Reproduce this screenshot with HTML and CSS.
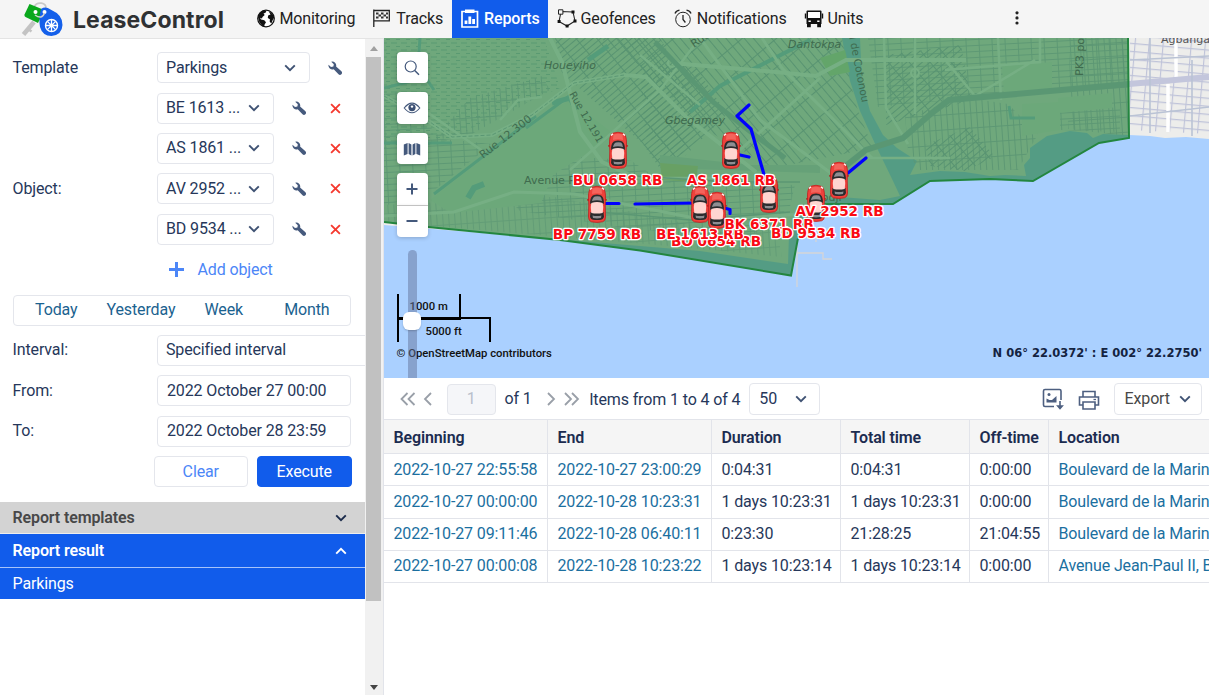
FILE: index.html
```
<!DOCTYPE html>
<html lang="en">
<head>
<meta charset="utf-8">
<title>LeaseControl</title>
<link rel="stylesheet" href="styles.css">
</head>
<body>
<svg class="defs" width="0" height="0">
  <defs>
    <symbol id="chev" viewBox="0 0 12 8"><path d="M1.2 1.3 6 6.2l4.800-4.900" fill="none" stroke="currentColor" stroke-width="1.900"/></symbol>
    <symbol id="wrench" viewBox="0 0 14 14"><path d="M3.200.7a4 4 0 0 1 4.900 4.900l5.300 4.700a2 2 0 0 1-2.900 2.900L5.700 8.200A4 4 0 0 1 .5 3.700L3 6l2.400-.5.400-2.200z" fill="currentColor"/></symbol>
    <symbol id="cross" viewBox="0 0 12 12"><path d="M1.200 1.200l9.600 9.600M10.800 1.200l-9.600 9.600" stroke="currentColor" stroke-width="2" fill="none"/></symbol>
    <symbol id="car" viewBox="0 0 22 38">
      <path d="M1 14.500l4-1.800v3H1.500zM21 14.500l-4-1.800v3h3.500z" fill="#b3161a"/>
      <path d="M5 2.500Q11 0 17 2.500 19.500 5 19.500 12l-.3 8 .3 12q0 4-3 4.800-5.500 1.200-11 0-3-.8-3-4.800l.3-12-.3-8Q2.500 5 5 2.500z" fill="#ee423c" stroke="#c21d1d" stroke-width=".8"/>
      <path d="M6.500 3.500Q11 2 15.500 3.500L16 9q-5-1.500-10 0z" fill="#f4645c"/>
      <path d="M4 4.500l2-1.800M18 4.500l-2-1.800" stroke="#fff" stroke-width="1.300"/>
      <path d="M4 17Q4.500 11 8 10q3-.8 6 0 3.500 1 4 7l-.5 2H4.500zM4.500 27h13l.5 5q-1 2.500-3 2.800-4 .6-8 0-2-.3-3-2.800z" fill="#2b2b2d"/>
      <path d="M6 16q.8-4 3-4.600 3-.6 5 .2 1.500 1 2 4.400Q11 14.500 6 16zM6.500 30.500q4.500 1.200 9 0L15 33q-4 .8-8 0z" fill="#8e8e92"/>
      <path d="M5.300 18Q11 16 16.700 18l.5 4-.5 6Q11 29 5.300 28l-.5-6z" fill="#ffd5d0"/>
    </symbol>
    <pattern id="g1" width="16" height="5" patternUnits="userSpaceOnUse" patternTransform="rotate(-40)"><path d="M0 .5h16M.5 0v5" stroke="#b4bad0" stroke-width="1"/></pattern>
    <pattern id="g2" width="22" height="7" patternUnits="userSpaceOnUse" patternTransform="rotate(50)"><path d="M0 .5h22M.5 0v7" stroke="#b4bad0" stroke-width="1.100"/></pattern>
    <pattern id="g3" width="13" height="6" patternUnits="userSpaceOnUse" patternTransform="rotate(-3)"><path d="M0 .5h13M.5 0v6" stroke="#bdc3d6" stroke-width=".9"/></pattern>
    <pattern id="g4" width="6" height="15" patternUnits="userSpaceOnUse" patternTransform="rotate(-4)"><path d="M0 .5h6M.5 0v15" stroke="#bcc1d5" stroke-width=".9"/></pattern>
    <pattern id="g5" width="14" height="8" patternUnits="userSpaceOnUse" patternTransform="rotate(5)"><path d="M0 .5h14M.5 0v8" stroke="#bfc3d9" stroke-width="1.300"/></pattern>
    <pattern id="marsh" width="10" height="7" patternUnits="userSpaceOnUse"><path d="M1 1h6M6 4.500h4" stroke="#b2c6ce" stroke-width=".9"/></pattern>
  </defs>
</svg>

<header class="topbar">
  <div class="brand">
    <svg class="brand-mark" viewBox="0 0 46 36" width="46" height="36">
      <path d="M15 21 4.500 33.500" stroke="#c3c3c3" stroke-width="4.500"/><path d="M9 28l3.500 2.500" stroke="#c3c3c3" stroke-width="2.500"/>
      <path d="M15 6C18 0 28 1 27 8" fill="none" stroke="#c9c9c9" stroke-width="1.800"/>
      <path d="M10.500 3 24 8.500q1.500 1 .8 2.500L19 22 6.500 16q-1.500-1-1-2.500z" fill="#0aa81c"/><circle cx="16.500" cy="11" r="2" fill="#fff"/>
      <path d="M22 8q4.500-3 9.500.5Q44 14 43.500 24q-.5 10-11 11-9 0-11.500-9-1.500-9 1-18z" fill="#1560ea"/>
      <circle cx="25.500" cy="11" r="2" fill="#fff"/><path d="M16 14q7 5 9.500-2" fill="none" stroke="#d0d0d0" stroke-width="1.500"/>
      <circle cx="32.500" cy="24.500" r="6" fill="none" stroke="#fff" stroke-width="1.400"/>
      <path d="M32.500 19v11M27 24.500h11M28.600 20.600l7.800 7.800M36.400 20.600l-7.800 7.800" stroke="#fff" stroke-width="1.300"/><circle cx="32.500" cy="24.500" r="2" fill="#fff"/>
    </svg>
    <span class="brand-name">LeaseControl</span>
  </div>
  <nav class="nav">
    <a class="nav-item"><svg width="20" height="20" viewBox="0 0 20 20"><circle cx="10" cy="9.500" r="8.300" fill="#fff" stroke="#111" stroke-width="1.200"/><path d="M2 8Q3 3.500 7 1.500l3.500.3-1 2-2 .8 1.200 1.300-2.200 2-.5 1.700-2-.8 1 1.700 3.300.8 1.700 2-1.400 2.200-.4 2.300Q3.200 16 2 8zM12.500 2q4.800 2 5.700 6.500l-1.600 2.700-1.200 3.300-1.700-1.700.2-2.500-2.100-1.300.3-2.500 2.400-1z" fill="#111"/></svg>Monitoring</a>
    <a class="nav-item"><svg width="20" height="20" viewBox="0 0 20 20"><path d="M1.800.5v17.500M1.800 1.500h15.500v10.300H1.800" fill="none" stroke="#222" stroke-width="1.300"/><path d="M4 3.500h2.500v2H4zM9 3.500h2.500v2H9zM14 3.500h2v2h-2zM6.500 5.500H9v2H6.500zM11.500 5.500H14v2h-2.500zM4 7.500h2.500v2H4zM9 7.500h2.500v2H9zM14 7.500h2v2h-2z" fill="#333"/></svg>Tracks</a>
    <a class="nav-item active"><svg width="20" height="20" viewBox="0 0 20 20"><path d="M2 2.500h15.500v15.500H2z" fill="none" stroke="#fff" stroke-width="1.700"/><path d="M5 .5h9.500v3.500H5z" fill="#fff"/><path d="M4.600 11.500h2.800V15H4.600zM8.400 7.500h2.800V15H8.400zM12.200 10H15v5h-2.800z" fill="#fff"/></svg>Reports</a>
    <a class="nav-item"><svg width="20" height="20" viewBox="0 0 20 20"><path d="M4 2.500 16 3M4 3l-2 9.500M2 12.500l8 4.500L18 12M16 3l2 9" fill="none" stroke="#222" stroke-width="1.100"/><path d="M1.500.8h4.400v4.400H1.500z" fill="#f5f5f5" stroke="#222"/><path d="M14.500 1.500h3v3h-3zM.6 11h3v3h-3zM16.500 10.500h3v3h-3zM8.600 15.500h3v3h-3z" fill="#111"/></svg>Geofences</a>
    <a class="nav-item"><svg width="20" height="20" viewBox="0 0 20 20"><circle cx="10" cy="10.500" r="7.300" fill="none" stroke="#222" stroke-width="1"/><path d="M10 6v4.500l2.400 3M2 4.500Q3 1.800 6.500 1.200M18 4.500Q17 1.800 13.500 1.200" fill="none" stroke="#222" stroke-width="1.300"/></svg>Notifications</a>
    <a class="nav-item"><svg width="20" height="20" viewBox="0 0 20 20"><path d="M3.500 1.500h13q1 0 1 1v12.500h-15V2.500q0-1 1-1z" fill="#111"/><path d="M4 3h12v6H4z" fill="#fff"/><path d="M1.500 4.500v5M18.500 4.500v5" stroke="#111" stroke-width="1.400"/><path d="M3 14.500h3.800v3.700H3zM13.200 14.500H17v3.700h-3.800z" fill="#111"/><path d="M4.500 11.500h2.300V13H4.500zM13.200 11.500h2.300V13h-2.300z" fill="#fff"/></svg>Units</a>
  </nav>
  <svg class="more" width="6" height="16" viewBox="0 0 6 16"><circle cx="3" cy="2.800" r="1.600"/><circle cx="3" cy="7.900" r="1.600"/><circle cx="3" cy="13" r="1.600"/></svg>
</header>

<main class="workspace">
  <aside class="side">
    <div class="side-content">
      <div class="form">
        <div class="row"><span class="label">Template</span><div class="select wide">Parkings<svg class="chev"><use href="#chev"/></svg></div><svg class="ico wr last"><use href="#wrench"/></svg></div>
        <div class="group">
          <span class="label">Object:</span>
          <div class="objects">
            <div class="row"><div class="select">BE 1613 ...<svg class="chev"><use href="#chev"/></svg></div><svg class="ico wr"><use href="#wrench"/></svg><svg class="ico rm"><use href="#cross"/></svg></div>
            <div class="row"><div class="select">AS 1861 ...<svg class="chev"><use href="#chev"/></svg></div><svg class="ico wr"><use href="#wrench"/></svg><svg class="ico rm"><use href="#cross"/></svg></div>
            <div class="row"><div class="select">AV 2952 ...<svg class="chev"><use href="#chev"/></svg></div><svg class="ico wr"><use href="#wrench"/></svg><svg class="ico rm"><use href="#cross"/></svg></div>
            <div class="row"><div class="select">BD 9534 ...<svg class="chev"><use href="#chev"/></svg></div><svg class="ico wr"><use href="#wrench"/></svg><svg class="ico rm"><use href="#cross"/></svg></div>
            <div class="row add"><svg width="15" height="15" viewBox="0 0 15 15"><path d="M7.500 0v15M0 7.500h15" stroke="#4c86f7" stroke-width="3"/></svg><span>Add object</span></div>
          </div>
        </div>
        <div class="row"><div class="periods"><span>Today</span><span>Yesterday</span><span>Week</span><span>Month</span></div></div>
        <div class="row"><span class="label">Interval:</span><div class="field over">Specified interval</div></div>
        <div class="row"><span class="label">From:</span><div class="field date">2022 October 27 00:00</div></div>
        <div class="row"><span class="label">To:</span><div class="field date">2022 October 28 23:59</div></div>
        <div class="row actions"><span class="btn">Clear</span><span class="btn primary">Execute</span></div>
      </div>
      <div class="acc muted"><b>Report templates</b><svg class="chev"><use href="#chev"/></svg></div>
      <div class="acc open"><b>Report result</b><svg class="chev up"><use href="#chev"/></svg></div>
      <div class="acc item">Parkings</div>
    </div>
    <div class="scroll"><i class="arrow up"></i><i class="thumb"></i><i class="arrow down"></i></div>
  </aside>

  <section class="content">
    <div class="map">
      <svg class="map-canvas" viewBox="384 38 825 340" width="825" height="340">
        <rect x="384" y="38" width="825" height="340" fill="#aad0ff"/>
        <path d="M384 38H1209V139L1186 137 1165 138 1150 136 1129 135 1103 134 1093 138 1087 133 1070 131 1047 136 1030 148 1030 158 1024 165 1026 176 1005 175 990 176 965 172 940 171 910 175 917 161 897 148 883 135 870 111 862 81 860 38H842L850 81 860 111 877 148 893 181 900 196 880 200 840 197 812 202 797 213 789 235 788 264 700 251 640 246 384 225z" fill="#ededeb"/>
        <g stroke="none">
          <path d="M384 38h160l16 50-60 26-60 30-56 4z" fill="url(#marsh)"/>
          <path d="M384 90l40 8 10 40 58 6-60 48-48 14z" fill="url(#g3)"/>
          <path d="M470 98l72-22 8 14-80 45-38 5z" fill="url(#g4)"/>
          <path d="M555 38h105l40 70-30 75-28-40-80-70z" fill="url(#g1)"/>
          <path d="M600 38h242l8 43 8 30 15 37-100 20-70-40-60-60z" fill="url(#g2)"/>
          <path d="M640 66l55 0 32 48-42 42-40-20z" fill="url(#g1)"/>
          <path d="M540 155l90 5 30 20 135 5-5 22-40 30-120-8-110-18-20-20z" fill="url(#g3)"/>
          <path d="M384 205l90-5 80-3 80 15 90 20 50-15 8 40-100-10-298-25z" fill="url(#g4)" opacity=".7"/>
          <path d="M868 38h260v45l-250 24z" fill="url(#g3)"/>
          <path d="M886 55l75-10 10 55-85 25z" fill="url(#g1)"/>
          <path d="M1070 38h58v98l-60-7z" fill="url(#g4)"/>
          <path d="M905 115l63-17 40 6 30 30-20 36-100 0-10-20z" fill="url(#g4)"/>
          <path d="M925 145l45-18 25 30-30 14-35-5z" fill="url(#g1)"/>
          <path d="M1060 112l60-5v25l-60-2z" fill="url(#g3)"/>
          <path d="M1130 38h79v96l-79-4z" fill="url(#g5)"/>
        </g>
        <g fill="#e6ede6">
          <path d="M430 200l100-78 40-22 45 35-62 40-12 28-90 10z"/><path d="M660 155l90 10 70 0 0 8-160-5z" fill="#d6dce0"/>
          <path d="M820 58l25-8 5 22-20 4z" fill="#cfe6bd"/><path d="M1002 66l50-4v28l-48 4zM1022 104l38-2v28l-38 6z"/>
          <path d="M1058 98l54-5v15l-54 5z"/><path d="M660 163l38 3-2 16-34-2z" fill="#dcd9b0"/>
        </g>
        <g fill="none" stroke="#aacfe6">
          <path d="M434 194l102-78M526 128l46-34" stroke-width="3"/><path d="M552 103l18-5 6 12" stroke-width="5"/>
          <path d="M468 198l6-10 10-4" stroke-width="6"/><path d="M384 143h68M384 88l28-7M420 38l-2 28 16 24" stroke-width="3"/>
          <path d="M588 60l20-14" stroke-width="5"/><path d="M690 112l30-26 90-46" stroke-width="4"/><path d="M1009 106l2 12h24" stroke-width="3"/>
        </g>
        <g fill="none" stroke="#fff">
          <path d="M384 96l40 22 28 19 40-2 40-20 42-32 50-8 22 2 40 40 70 55" stroke-width="4"/>
          <path d="M550 38l12 24 18 70 22 30 26 12" stroke-width="4"/><path d="M384 216l70-4 60-20 60 2 130 26 100-6" stroke-width="3"/>
          <path d="M424 110l60 42M500 120l18-20 24-3M570 170l90-80 40-52M640 55l60 50" stroke-width="2.500"/>
          <path d="M672 63l104 9 40 4 30-16 60 0h60" stroke-width="4"/><path d="M762 38l20 30 90 90M740 150l80-72M700 38l60 82 80 60" stroke-width="3"/>
          <path d="M884 38l2 70 22 36M915 38v76M945 60l30 36 60-36M998 38l3 62M1040 38v24l-95 8M860 158h90M620 178h110" stroke-width="2.500"/>
          <circle cx="915" cy="73" r="4" stroke-width="2"/><circle cx="672" cy="63" r="4" stroke-width="2"/>
          <path d="M1176 38v40M1168 84v48" stroke-width="3.500"/>
        </g>
        <g fill="none" stroke="#bac3d5">
          <path d="M655 42l58 60 30 24 42 32" stroke-width="5"/>
          <path d="M838 172l28-22 37-12 30-26 16-12 180-16" stroke-width="6"/>
          <path d="M1129 84l80-7" stroke="#c3c6dc" stroke-width="6"/>
          <path d="M384 96l40 22 28 19 40-2 40-20 42-32 50-8" stroke-width="1" stroke-dasharray="4 2"/>
          <path d="M555 182l80-6 95 6 70 0M600 212l90 8 100-8M1130 116l79-9M1130 60l79-4M1150 38v95M1192 60v76" stroke-width="1.600"/>
        </g>
        <path d="M797 245v42M797 253h26v6h9M816 238v4" fill="none" stroke="#d5d5d8" stroke-width="1.300"/>
        <path d="M384 38H1128L1129 138 1099 143 1033 181 990 179 930 181 893 204H812L798 238 791 275.500 640 250.500 560 240 428 227 384 222z" fill="#1b7932" fill-opacity=".6"/>
        <path d="M1128 38 1129 138 1099 143 1033 181 990 179 930 181 893 204H812L798 238 791 275.500 640 250.500 560 240 428 227 384 222" fill="none" stroke="#23863f" stroke-width="2"/>
        <g class="places">
          <text x="544" y="69" font-style="italic">Houeyiho</text><text x="665" y="124" font-style="italic">Gbegamey</text><text x="788" y="47.500" font-style="italic">Dantokpa</text>
          <text transform="translate(483 159) rotate(-38)">Rue 12.300</text><text transform="translate(569 94) rotate(60)" font-size="10">Rue 12.191</text>
          <text x="524" y="184">Avenue Pape</text><text transform="translate(848 31) rotate(79)" font-size="10.500">al de Cotonou</text><text transform="translate(1083 76) rotate(-88)">PK3 poste</text>
          <text x="1161" y="43" class="dark">Agbangandan</text><text transform="translate(694 48) rotate(-35)">Rue</text><text x="815" y="201">Kodji</text>
        </g>
        <path d="M749 105 737 116 751 129 765 178M740 155l9 2M848 173l18-15M606 203.500h13M635 204l60-1M726 208.500l4 1v4" class="track"/>
        <use href="#car" x="607" y="131" width="22" height="38"/><use href="#car" x="586" y="185" width="22" height="38"/>
        <use href="#car" x="720" y="131" width="22" height="38"/><use href="#car" x="758" y="175" width="22" height="38"/>
        <use href="#car" x="805" y="184" width="22" height="38"/><use href="#car" x="828" y="161" width="22" height="38"/>
        <use href="#car" x="689" y="185" width="22" height="38"/><use href="#car" x="706" y="191" width="22" height="38"/>
        <g class="plates">
          <text x="617.500" y="185">BU 0658 RB</text><text x="731" y="185">AS 1861 RB</text><text x="597" y="239">BP 7759 RB</text>
          <text x="716" y="246">BO 0654 RB</text><text x="700" y="239">BE 1613 RB</text><text x="769" y="229">BK 6371 RB</text>
          <text x="839.500" y="215.500">AV 2952 RB</text><text x="816" y="238">BD 9534 RB</text>
        </g>
        <path d="M398 294v48M397 318h94M397 319h64M460 294v25M490 318v24" fill="none" stroke="#000" stroke-width="2"/>
        <g class="scale"><text x="409.500" y="310">1000 m</text><text x="425.500" y="335">5000 ft</text><text x="396.500" y="357">© OpenStreetMap contributors</text></g>
        <text class="coords" x="1202" y="357">N 06° 22.0372' : E 002° 22.2750'</text>
      </svg>
      <div class="controls">
        <span class="ctl"><svg width="18" height="18" viewBox="0 0 18 18"><circle cx="7.700" cy="7.500" r="5.500" fill="none" stroke="#44597c" stroke-width="1.200"/><path d="M11.700 11.500l4.300 4.300" stroke="#44597c" stroke-width="1.500"/></svg></span>
        <span class="ctl"><svg width="18" height="18" viewBox="0 0 18 18"><path d="M1.200 9Q9-.8 16.800 9 9 18.500 1.200 9z" fill="none" stroke="#44597c" stroke-width="1.100"/><circle cx="9" cy="8.600" r="3.600" fill="#3c5074"/><circle cx="9" cy="7.600" r="1.200" fill="#fff"/></svg></span>
        <span class="ctl"><svg width="18" height="18" viewBox="0 0 18 18"><path d="M.8 4.500 4.600 3v11L.8 15.500zM5.600 3l2.800 1.500v11L5.600 14zM9.600 4.500 12.400 3v11l-2.800 1.500zM13.400 3l3.800 1.500v11L13.400 14z" fill="#44597c"/></svg></span>
        <div class="zoom"><span class="ctl"><svg width="12" height="12" viewBox="0 0 12 12"><path d="M6 .5v11M.5 6h11" stroke="#44597c" stroke-width="2"/></svg></span><span class="ctl"><svg width="12" height="12" viewBox="0 0 12 12"><path d="M.5 6h11" stroke="#44597c" stroke-width="2"/></svg></span></div>
      </div>
      <div class="slider"><i class="knob"></i></div>
    </div>

    <div class="toolbar">
      <svg class="pg" width="34" height="14" viewBox="0 0 34 14"><path d="M7.500 1l-6 6 6 6M14.500 1l-6 6 6 6M31 1l-6 6 6 6" fill="none" stroke="#999fa8" stroke-width="1.800"/></svg>
      <span class="page">1</span><span class="of">of 1</span>
      <svg class="pg2" width="34" height="14" viewBox="0 0 34 14"><path d="M2 1l6 6-6 6M19 1l6 6-6 6M26 1l6 6-6 6" fill="none" stroke="#999fa8" stroke-width="1.800"/></svg>
      <span class="count">Items from 1 to 4 of 4</span>
      <div class="size">50<svg class="chev"><use href="#chev"/></svg></div>
      <svg class="shot" width="22" height="22" viewBox="0 0 22 22"><path d="M12 18.500H3q-1.500 0-1.500-1.500V3Q1.500 1.500 3 1.500h14.500Q19 1.500 19 3v9" fill="none" stroke="#4d5f80" stroke-width="1.600"/><path d="M4.500 14.500v-4l3 1.500 2.500 0L14.500 8v6.500z" fill="#4d5f80"/><circle cx="7" cy="6.500" r="1.500" fill="#4d5f80"/><path d="M18 13v7M15.800 18l2.200 2.600 2.200-2.600z" stroke="#4d5f80" stroke-width="1.600" fill="#4d5f80"/></svg>
      <svg class="print" width="22" height="22" viewBox="0 0 22 22"><path d="M5 8V2.500h12V8M5 16H1.500V8h19v8H17M5 13h12v7H5z" fill="none" stroke="#4d5f80" stroke-width="1.600"/><path d="M15.500 10.500H18" stroke="#4d5f80" stroke-width="1.300"/></svg>
      <div class="export">Export<svg class="chev"><use href="#chev"/></svg></div>
    </div>

    <div class="table">
      <div class="tr head"><span>Beginning</span><span>End</span><span>Duration</span><span>Total time</span><span>Off-time</span><span>Location</span></div>
      <div class="tr"><a>2022-10-27 22:55:58</a><a>2022-10-27 23:00:29</a><span>0:04:31</span><span>0:04:31</span><span>0:00:00</span><a>Boulevard de la Marina</a></div>
      <div class="tr"><a>2022-10-27 00:00:00</a><a>2022-10-28 10:23:31</a><span>1 days 10:23:31</span><span>1 days 10:23:31</span><span>0:00:00</span><a>Boulevard de la Marina</a></div>
      <div class="tr"><a>2022-10-27 09:11:46</a><a>2022-10-28 06:40:11</a><span>0:23:30</span><span>21:28:25</span><span>21:04:55</span><a>Boulevard de la Marina</a></div>
      <div class="tr"><a>2022-10-27 00:00:08</a><a>2022-10-28 10:23:22</a><span>1 days 10:23:14</span><span>1 days 10:23:14</span><span>0:00:00</span><a>Avenue Jean-Paul II, Benin</a></div>
    </div>
  </section>
</main>
</body>
</html>
```

FILE: styles.css
```
* { box-sizing: border-box; }
body { margin: 0; width: 1209px; height: 695px; overflow: hidden; display: flex; flex-direction: column; background: #fff; font: 16px/20px Roboto, sans-serif; letter-spacing: -.13px; color: #26375a; }
svg { display: block; flex: none; }
.defs { position: absolute; }

.topbar { flex: none; height: 38px; display: flex; background: #f5f5f5; color: #222; }
.brand { width: 247px; padding-left: 19px; display: flex; align-items: center; }
.brand-mark { margin-right: 8px; }
.brand-name { font: 700 23px/30px Inter, sans-serif; color: #2f3133; letter-spacing: .1px; padding-top: 1px; white-space: nowrap; }
.nav { display: flex; }
.nav-item { display: flex; align-items: center; gap: 4px; padding: 0 8.500px; height: 38px; white-space: nowrap; }
.nav-item.active { background: #115ceb; color: #fff; font-weight: 500; }
.more { margin: 10px 0 0 142px; fill: #222; }

.workspace { flex: 1; display: flex; min-height: 0; }
.side { flex: none; width: 384px; display: flex; border-right: 1px solid #e2e4ea; border-top: 1px solid #e4e4e4; }
.side-content { width: 364.500px; overflow: hidden; }
.form { padding: 8.500px 0 0 12.500px; height: 462.500px; }
.row { display: flex; align-items: center; height: 40.400px; }
.label { flex: none; width: 144px; }
.group { display: flex; align-items: center; }
.select, .field { flex: none; height: 31px; border: 1px solid #e4e6ec; border-radius: 4px; background: #fff; display: flex; align-items: center; justify-content: space-between; padding: 0 13px 0 8.500px; width: 117.500px; white-space: nowrap; }
.select.wide { width: 153.500px; }
.chev { width: 12px; height: 8px; color: #3f5273; }
.ico { width: 14px; height: 14px; color: #465a7d; margin-left: 17.500px; }
.ico.rm { width: 11px; height: 11px; color: #f5392f; margin-left: 24px; }
.add { padding-left: 12px; gap: 14px; color: #4c86f7; }
.periods { width: 338px; height: 31px; border: 1px solid #e4e6ec; border-radius: 4px; display: flex; align-items: center; justify-content: space-between; padding: 0 20px 0 21.500px; color: #1b628f; }
.periods span:nth-child(3) { margin-right: 12px; }
.field.over { width: 230px; }
.field.date { width: 194px; padding-left: 9.500px; }
.actions { gap: 9px; padding-left: 141px; }
.btn { width: 94.500px; height: 31.500px; border: 1px solid #e4e6ec; border-radius: 4px; color: #4c86f7; display: flex; align-items: center; justify-content: center; }
.btn.primary { background: #115ceb; border-color: #115ceb; color: #fff; }
.acc { display: flex; align-items: center; justify-content: space-between; padding: 1px 18px 0 12.500px; height: 32.500px; }
.acc b { font-weight: 600; }
.acc.muted { background: #d3d3d3; color: #484848; border-bottom: 1px solid #eee; }
.acc.muted .chev { color: #1b2b4b; }
.acc.open { background: #115ceb; color: #fff; }
.acc.open .chev { color: #fff; transform: rotate(180deg); }
.acc.item { background: #115ceb; color: #fff; border-top: 1px solid #a6c3fa; }
.scroll { width: 18.500px; background: #f1f1f1; display: flex; flex-direction: column; align-items: center; }
.arrow { border: 4px solid transparent; }
.arrow.up { border-bottom: 5px solid #a0a0a0; border-top: 0; margin-top: 7px; }
.arrow.down { border-top: 5px solid #444; border-bottom: 0; margin-top: auto; margin-bottom: 5px; }
.thumb { width: 15px; height: 544px; margin-top: 6px; background: #c1c1c1; }

.content { flex: 1; min-width: 0; display: flex; flex-direction: column; overflow: hidden; }
.map { position: relative; flex: none; height: 340px; overflow: hidden; }
.places { font: 11px "DejaVu Sans", sans-serif; letter-spacing: 0; fill: #3f6b4e; }
.places .dark { fill: #555; }
.track { fill: none; stroke: #00f; stroke-width: 3.200; stroke-linecap: round; stroke-linejoin: round; }
.plates { font: bold 13.600px "DejaVu Sans", sans-serif; letter-spacing: 0; fill: #fa0a14; text-anchor: middle; paint-order: stroke; stroke: #fff; stroke-width: 2.500px; stroke-linejoin: round; }
.scale { font: 500 11.300px Roboto, sans-serif; letter-spacing: 0; fill: #111; }
.coords { font: bold 11.500px "DejaVu Sans", sans-serif; letter-spacing: 0; fill: #14233f; text-anchor: end; }
.controls { position: absolute; left: 13px; top: 14px; display: flex; flex-direction: column; gap: 9.200px; }
.ctl { width: 31px; height: 31.300px; background: #fff; border-radius: 4px; display: flex; align-items: center; justify-content: center; box-shadow: 0 1px 4px rgba(0,0,0,.2); padding-right: 1px; }
.zoom .ctl:first-child { border-radius: 4px 4px 0 0; border-bottom: 1px solid #ccc; height: 32.500px; padding-bottom: 1px; }
.zoom .ctl:last-child { border-radius: 0 0 4px 4px; padding-bottom: 2px; }
.slider { position: absolute; left: 23.500px; top: 212px; width: 9px; height: 130px; border-radius: 5px 5px 0 0; background: rgba(100,115,155,.5); }
.knob { position: absolute; left: -4.500px; top: 62px; width: 18px; height: 18px; border-radius: 6px; background: #fff; box-shadow: 0 1px 2px rgba(0,0,0,.2); }

.toolbar { flex: none; height: 41px; display: flex; align-items: center; padding: 1px 7px 0 16px; white-space: nowrap; }
.page { width: 48.500px; height: 31px; margin-left: 13px; border: 1px solid #e4e6ec; border-radius: 4px; background: #f5f6f9; color: #b8bfcc; display: flex; align-items: center; justify-content: center; }
.of { margin: 0 14px 0 9px; }
.count { margin: 1px 8.500px 0 9.500px; }
.size, .export { height: 32px; border: 1px solid #e4e6ec; border-radius: 4px; display: flex; align-items: center; justify-content: space-between; padding: 0 12px 0 9.500px; width: 71.500px; }
.shot { margin-left: auto; }
.print { margin: 1px 14px 0 14px; }
.export { width: 88px; padding-right: 10px; color: #484848; }
.table { border-top: 1px solid #e2e4ea; width: 900px; }
.tr { display: grid; grid-template-columns: 164px 164px 129px 129px 79px 1fr; height: 32.100px; border-bottom: 1px solid #e2e4ea; }
.tr > * { padding: 5.300px 0 0 9.500px; border-right: 1px solid #e2e4ea; white-space: nowrap; }
.tr a { color: #1b6f9f; }
.tr.head { height: 34.400px; background: #f5f5f5; color: #1c2c50; font-weight: 600; }
.tr.head > * { padding-top: 8px; }
```
